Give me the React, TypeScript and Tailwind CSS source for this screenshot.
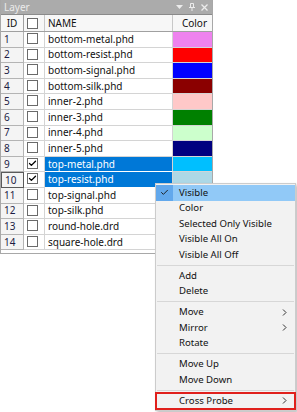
import { Check } from "lucide-react";

interface LayerRow {
    id: number;
    name: string;
    color: string;
    checked?: boolean;
    selected?: boolean;
}

const layers: LayerRow[] = [
    { id: 1, name: "bottom-metal.phd", color: "#ee82ee" },
    { id: 2, name: "bottom-resist.phd", color: "#ff0000" },
    { id: 3, name: "bottom-signal.phd", color: "#0000ff" },
    { id: 4, name: "bottom-silk.phd", color: "#8b0000" },
    { id: 5, name: "inner-2.phd", color: "#ffc8c8" },
    { id: 6, name: "inner-3.phd", color: "#008000" },
    { id: 7, name: "inner-4.phd", color: "#ccffcc" },
    { id: 8, name: "inner-5.phd", color: "#000080" },
    { id: 9, name: "top-metal.phd", color: "#00bfff", checked: true, selected: true },
    { id: 10, name: "top-resist.phd", color: "#add8e6", checked: true, selected: true },
    { id: 11, name: "top-signal.phd", color: "#808080" },
    { id: 12, name: "top-silk.phd", color: "#ffff00" },
    { id: 13, name: "round-hole.drd", color: "#ffa500" },
    { id: 14, name: "square-hole.drd", color: "#800080" },
];

type MenuEntry = { label: string; sub?: boolean; checked?: boolean; boxed?: boolean } | "sep";

const menu: MenuEntry[] = [
    { label: "Visible", checked: true },
    { label: "Color" },
    { label: "Selected Only Visible" },
    { label: "Visible All On" },
    { label: "Visible All Off" },
    "sep",
    { label: "Add" },
    { label: "Delete" },
    "sep",
    { label: "Move", sub: true },
    { label: "Mirror", sub: true },
    { label: "Rotate" },
    "sep",
    { label: "Move Up" },
    { label: "Move Down" },
    "sep",
    { label: "Cross Probe", sub: true, boxed: true },
];

const Box = ({ checked }: { checked?: boolean }) => (
    <div className="w-[11px] h-[11px] border border-[#6a6a6a] bg-white flex items-center justify-center">
        {checked && <Check size={9} strokeWidth={3.5} className="text-black" />}
    </div>
);

const Chevron = () => (
    <svg width="5" height="7" viewBox="0 0 5 7" className="text-[#333]">
        <path d="M1 0.5 L4 3.5 L1 6.5" fill="none" stroke="currentColor" strokeWidth="1" />
    </svg>
);

const App = () => {
    return (
        <div
            className="relative w-[297px] h-[412px] bg-white overflow-hidden text-[10px] text-[#111]"
            style={{ fontFamily: '"Noto Sans", "Liberation Sans", sans-serif' }}
        >
            {/* layer panel */}
            <div className="w-[213px] border-x border-b border-[#a8a8a8] pb-[3px]">
                <div className="h-[14px] bg-[#ababab] flex items-center justify-between pl-[3px] pr-[4px] text-[#ececec]">
                    <span className="leading-none">Layer</span>
                    <div className="flex items-center gap-[6px]">
                        <svg width="7" height="4" viewBox="0 0 7 4">
                            <path d="M0 0 H7 L3.5 4 Z" fill="#ececec" />
                        </svg>
                        <svg width="6" height="8" viewBox="0 0 6 8">
                            <path d="M1.5 0.5 H4.5 V4.5 H1.5 Z M0 4.5 H6 M3 4.5 V8" fill="none" stroke="#ececec" strokeWidth="1" />
                        </svg>
                        <svg width="7" height="7" viewBox="0 0 7 7">
                            <path d="M0.5 0.5 L6.5 6.5 M6.5 0.5 L0.5 6.5" stroke="#ececec" strokeWidth="1.3" />
                        </svg>
                    </div>
                </div>

                {/* header */}
                <div className="flex h-[18px] bg-[#f7f7f7] border-b border-[#a0a0a0] border-t border-t-[#8a8a8a]">
                    <div className="w-[23px] border-r border-[#a0a0a0] flex items-center justify-center">ID</div>
                    <div className="w-[21px] border-r border-[#c8c8c8] pl-[3px] pt-[3px]">
                        <Box />
                    </div>
                    <div className="w-[128px] border-r border-[#c8c8c8] flex items-center pl-[3px]">NAME</div>
                    <div className="flex-1 flex items-center justify-center pl-[4px]">Color</div>
                </div>

                {layers.map((l) => (
                    <div key={l.id} className="flex h-[15.6px]">
                        <div
                            className={`w-[23px] bg-[#f4f4f4] flex items-center pl-[3px] text-[#1c1c44] ${
                                l.id === 10 ? "border border-[#5a5a5a]" : "border-r border-b border-[#b4b4b4]"
                            }`}
                        >
                            {l.id}
                        </div>
                        <div className="w-[21px] border-r border-b border-[#d4d4d4] pl-[3px] pt-[1px]">
                            <Box checked={l.checked} />
                        </div>
                        <div
                            className={`w-[128px] border-r border-b border-[#d4d4d4] flex items-center pl-[3px] ${
                                l.selected ? "bg-[#0078d7] text-white border-b-white" : ""
                            }`}
                        >
                            {l.name}
                        </div>
                        <div className="flex-1 border-b border-[#d4d4d4]" style={{ backgroundColor: l.color }} />
                    </div>
                ))}
            </div>

            {/* context menu */}
            <div className="absolute left-[155px] top-[183px] w-[141px] bg-[#f2f2f2] border border-[#cccccc] shadow-[2px_2px_3px_rgba(0,0,0,0.25)] py-[1px] text-[9.6px]">
                {menu.map((m, i) =>
                    m === "sep" ? (
                        <div key={i} className="h-[5.5px] flex items-center px-[1px]">
                            <div className="h-px w-full bg-[#d7d7d7]" />
                        </div>
                    ) : (
                        <div
                            key={i}
                            className={`h-[15.5px] flex items-center ${m.checked ? "bg-[#91c9f7]" : ""} ${
                                m.boxed ? "outline-2 outline-[#e0201c] -outline-offset-1" : ""
                            }`}
                        >
                            <div
                                className={`w-[17px] h-full flex items-center justify-center ${
                                    m.checked ? "bg-[#62a8ec]" : ""
                                }`}
                            >
                                {m.checked && <Check size={9} strokeWidth={2.5} className="text-[#1a1a1a]" />}
                            </div>
                            <span className="flex-1 pl-[6px]">{m.label}</span>
                            {m.sub && (
                                <span className="pr-[8px]">
                                    <Chevron />
                                </span>
                            )}
                        </div>
                    )
                )}
            </div>
        </div>
    );
};

export default App;
